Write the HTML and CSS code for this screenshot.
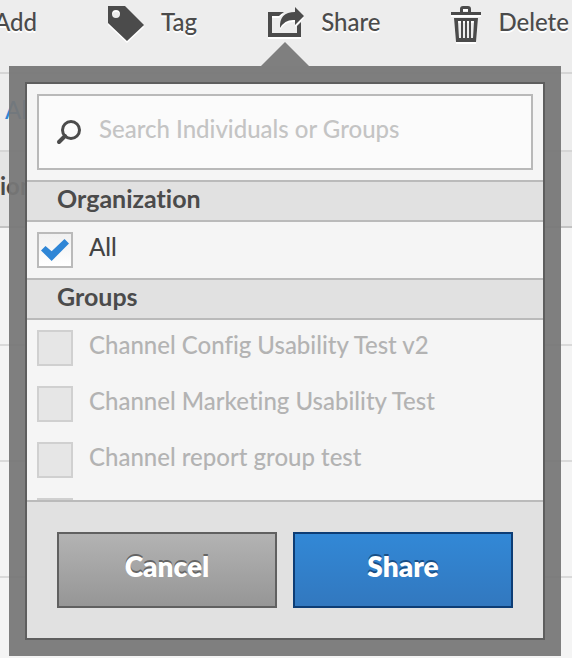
FILE: index.html
```html
<!DOCTYPE html>
<html lang="en">
<head>
<meta charset="utf-8">
<title>Share</title>
<meta name="viewport" content="width=device-width, initial-scale=1">
<link rel="stylesheet" href="styles.css">
</head>
<body>
<main class="page">
  <nav class="toolbar" aria-label="Actions">
    <button class="tool tool-add" type="button">Add</button>
    <button class="tool" type="button">
      <svg class="icon" width="38" height="38" viewBox="0 0 38 38" aria-hidden="true"><path fill="#4b4b4b" fill-rule="evenodd" d="M1 1H18L37 20L20 36L1 18ZM9 5A4 4 0 1 0 9 13A4 4 0 1 0 9 5Z"/></svg>
      Tag
    </button>
    <button class="tool" type="button">
      <svg class="icon" width="38" height="38" viewBox="0 0 38 38" aria-hidden="true"><path fill="#4b4b4b" d="M1 7H17Q14 9 12 11H5V28H30V21L34 17V32H1ZM28 2L37 11L28 20V15Q18 14 13 23Q12 7 28 7Z"/></svg>
      Share
    </button>
    <button class="tool" type="button">
      <svg class="icon" width="32" height="38" viewBox="0 0 32 38" aria-hidden="true"><path fill="#4b4b4b" fill-rule="evenodd" d="M1 7H10V4Q10 1 13 1H18Q21 1 21 4V7H31V10H1ZM13 7H18V4H13ZM4 13H28L26 37H6ZM8 16L9 33H11V16ZM13 16V33H15V16ZM17 16V33H19V16ZM21 16V33H23L24 16Z"/></svg>
      Delete
    </button>
  </nav>
  <div class="filter"><a href="#all">All</a></div>
  <div class="columns">ion</div>
  <div class="row"></div>
  <div class="row"></div>
  <div class="row"></div>
  <div class="row row-last"></div>

  <form class="popover" aria-label="Share">
    <svg class="arrow" width="48" height="24" viewBox="0 0 48 24" aria-hidden="true"><path fill="#7f7f7f" d="M0 24L24 0L48 24Z"/></svg>
    <div class="panel">
      <div class="search">
        <svg width="26" height="26" viewBox="0 0 26 26" aria-hidden="true"><circle cx="16" cy="11" r="8.500" fill="none" stroke="#4b4b4b" stroke-width="3"/><path d="M10 17L4 23" stroke="#4b4b4b" stroke-width="4" stroke-linecap="round"/></svg>
        <input type="text" placeholder="Search Individuals or Groups" aria-label="Search Individuals or Groups">
      </div>
      <h2>Organization</h2>
      <div class="options">
        <label><input type="checkbox" checked>All</label>
      </div>
      <h2>Groups</h2>
      <div class="options groups">
        <label><input type="checkbox" disabled>Channel Config Usability Test v2</label>
        <label><input type="checkbox" disabled>Channel Marketing Usability Test</label>
        <label><input type="checkbox" disabled>Channel report group test</label>
        <label><input type="checkbox" disabled aria-label="Group"></label>
      </div>
      <footer>
        <button class="btn cancel" type="button">Cancel</button>
        <button class="btn share" type="submit">Share</button>
      </footer>
    </div>
  </form>
</main>
</body>
</html>
```
FILE: styles.css
```css
* { box-sizing: border-box; }
body {
  margin: 0;
  background: #f4f4f4;
  color: #4b4b4b;
  font-family: Lato, "Noto Sans", sans-serif;
  font-size: 24px;
  font-weight: 500;
  font-variant-ligatures: none;
  line-height: 32px;
}
button, input { font: inherit; color: inherit; }
.page { position: relative; overflow: hidden; min-height: 100vh; }
.toolbar {
  display: flex;
  align-items: flex-start;
  gap: 70px;
  height: 72px;
  padding-top: 5px;
  background: #ededed;
}
.tool {
  display: flex;
  flex: none;
  gap: 16px;
  padding: 0;
  border: 0;
  background: none;
  line-height: 34px;
  white-space: nowrap;
  text-shadow: 0 2px 0 #fff;
}
.tool-add { margin-left: -6px; }
.icon { flex: none; filter: drop-shadow(0 2px 0 #fff); }
.filter {
  height: 78px;
  padding: 20px 5px;
  border-top: 2px solid #d5d5d5;
  background: #ededed;
}
.filter a { color: #2f86d6; text-decoration: none; }
.columns {
  height: 78px;
  padding: 18px 0;
  border-top: 2px solid #d5d5d5;
  border-bottom: 2px solid #c3c3c3;
  background: #e4e4e4;
  font-weight: 700;
}
.row { height: 116px; border-bottom: 2px solid #dadada; }
.columns + .row { height: 118px; }
.row-last { height: 80px; border: 0; }
.popover {
  position: absolute;
  top: 66px;
  left: 9px;
  right: 11px;
  padding: 16px;
  background: rgba(119, 119, 119, 0.94);
}
.arrow { position: absolute; top: -24px; left: 252px; }
.panel { border: 2px solid #5e5e5e; background: #f5f5f5; }
.search {
  display: flex;
  align-items: center;
  gap: 18px;
  height: 76px;
  margin: 10px;
  padding: 0 16px;
  border: 2px solid #b9b9b9;
  background: #fbfbfb;
}
.search input {
  flex: 1;
  min-width: 0;
  height: 68px;
  padding: 0 0 8px;
  border: 0;
  outline: 0;
  background: none;
}
.search input::placeholder { color: #c4c4c4; opacity: 1; }
h2 {
  height: 42px;
  margin: 0;
  padding: 0 30px;
  border: solid #bababa;
  border-width: 2px 0;
  background: #e1e1e1;
  font-size: 25px;
  line-height: 32px;
}
.options {
  display: flex;
  flex-direction: column;
  gap: 20px;
  padding: 10px;
}
.options label {
  display: flex;
  flex: none;
  gap: 16px;
  height: 36px;
  line-height: 30px;
  color: #444;
}
.groups { height: 180px; overflow: hidden; }
.groups label { color: #b3b3b3; }
.options input {
  appearance: none;
  display: grid;
  place-items: center;
  flex: none;
  width: 36px;
  height: 36px;
  margin: 0;
  border: 2px solid #bababa;
  background: linear-gradient(#f0f0f0, #fff);
}
.options input:checked::before {
  content: "";
  width: 28px;
  height: 22px;
  background: #2f86d6;
  clip-path: polygon(0 52%, 16% 32%, 38% 56%, 84% 0, 100% 20%, 38% 100%);
}
.options input:disabled { border-color: #d0d0d0; background: #e6e6e6; }
footer {
  display: flex;
  gap: 16px;
  padding: 30px;
  border-top: 2px solid #bababa;
  background: #e1e1e1;
}
.btn {
  flex: 1;
  height: 76px;
  padding: 0 0 8px;
  border: 2px solid #606060;
  background: linear-gradient(#b3b3b3, #969696);
  color: #fff;
  font-size: 28px;
  font-weight: 800;
  text-shadow: 0 -2px 0 #656565;
}
.share {
  border-color: #0d3d75;
  background: linear-gradient(#3288d6, #3278bf);
  text-shadow: 0 -2px 0 #194f86;
}
```
